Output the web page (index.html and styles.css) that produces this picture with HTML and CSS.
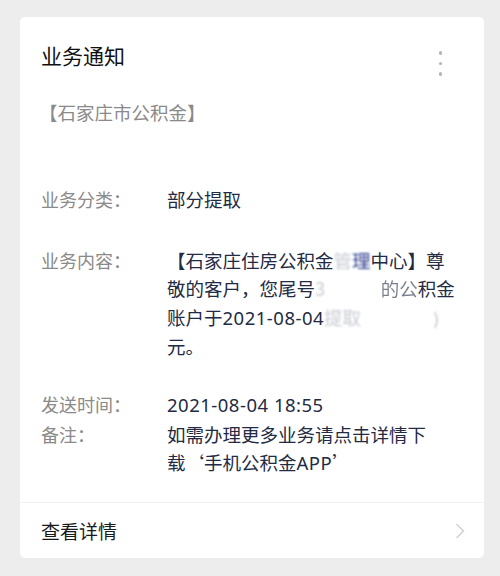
FILE: index.html
```html
<!DOCTYPE html>
<html lang="zh-CN">
<head>
<meta charset="utf-8">
<title>业务通知</title>
<link rel="stylesheet" href="styles.css">
</head>
<body>
<div class="card">
  <div class="body">
    <div class="header">
      <div class="title">业务通知</div>
      <div class="more"><span></span><span></span><span></span></div>
    </div>
    <div class="source">【石家庄市公积金】</div>
    <div class="row row-first">
      <div class="label">业务分类：</div>
      <div class="value">部分提取</div>
    </div>
    <div class="row row-content">
      <div class="label">业务内容：</div>
      <div class="value">【石家庄住房公积金<span class="fade">管</span><span class="smudge">理</span>中心】尊<br>敬的客户，您尾号<span class="fade">3</span><span class="hide num">12345</span><span class="fade2">的公</span>积金<br>账户于<span class="num">2021-08-04</span><span class="fade">提取</span><span class="hide num">1234.56</span><span class="fade num">)</span><br>元。</div>
    </div>
    <div class="row row-time">
      <div class="label">发送时间：</div>
      <div class="value"><span class="num">2021-08-04 18:55</span></div>
    </div>
    <div class="row row-note">
      <div class="label">备注：</div>
      <div class="value">如需办理更多业务请点击详情下<br>载‘手机公积金<span class="num">APP</span>’</div>
    </div>
  </div>
  <div class="footer">
    <div class="footer-text">查看详情</div>
    <svg class="chevron" width="10" height="16" viewBox="0 0 10 16"><polyline points="1.5,1 8.5,8 1.5,15" fill="none" stroke="#cfcfcf" stroke-width="1.4"/></svg>
  </div>
</div>
</body>
</html>
```

FILE: styles.css
```css
html, body {
  margin: 0;
  padding: 0;
}
body {
  background: #ededed;
  padding: 17px 16px 18px 20px;
  font-family: "Noto Sans CJK SC", "Noto Sans", sans-serif;
  width: 464px;
}
.card {
  background: #ffffff;
  border-radius: 5px;
  overflow: hidden;
}
.body {
  padding: 24px 42px 25px 21px;
}
.header {
  display: flex;
  justify-content: space-between;
  align-items: flex-start;
  height: 28px;
}
.title {
  font-size: 21px;
  line-height: 28px;
  color: #111111;
}
.more {
  display: flex;
  flex-direction: column;
  gap: 7px;
  margin-top: 10px;
}
.more span {
  width: 3.5px;
  height: 3.5px;
  border-radius: 50%;
  background: #b4b4b4;
}
.source {
  margin-top: 29px;
  font-size: 18.5px;
  line-height: 28px;
  color: #8a8a8a;
  margin-left: -2px;
}
.row {
  display: grid;
  grid-template-columns: 126px 1fr;
  line-height: 28px;
}
.row-first { margin-top: 59px; }
.row-content { margin-top: 33px; }
.row-time { margin-top: 30px; }
.row-note { margin-top: 1px; }
.label {
  font-size: 18px;
  color: #8a8a8a;
}
.value {
  font-size: 18.5px;
  color: #222b43;
  white-space: nowrap;
}
.num {
  font-family: "Noto Sans", "Noto Sans CJK SC", sans-serif;
  letter-spacing: 0.5px;
}
.fade {
  opacity: 0.25;
  filter: blur(1px);
}
.fade2 {
  opacity: 0.6;
  filter: blur(0.6px);
}
.smudge {
  color: #2a3a8a;
  filter: blur(0.8px);
}
.hide {
  color: transparent;
}
.footer {
  border-top: 1px solid #f1f1f1;
  height: 55px;
  padding: 0 19px 0 21px;
  display: flex;
  align-items: center;
  justify-content: space-between;
}
.footer-text {
  font-size: 19px;
  line-height: 28px;
  color: #1a1a1a;
  margin-top: 1px;
}
.chevron {
  display: block;
  margin-top: 1px;
}
```
